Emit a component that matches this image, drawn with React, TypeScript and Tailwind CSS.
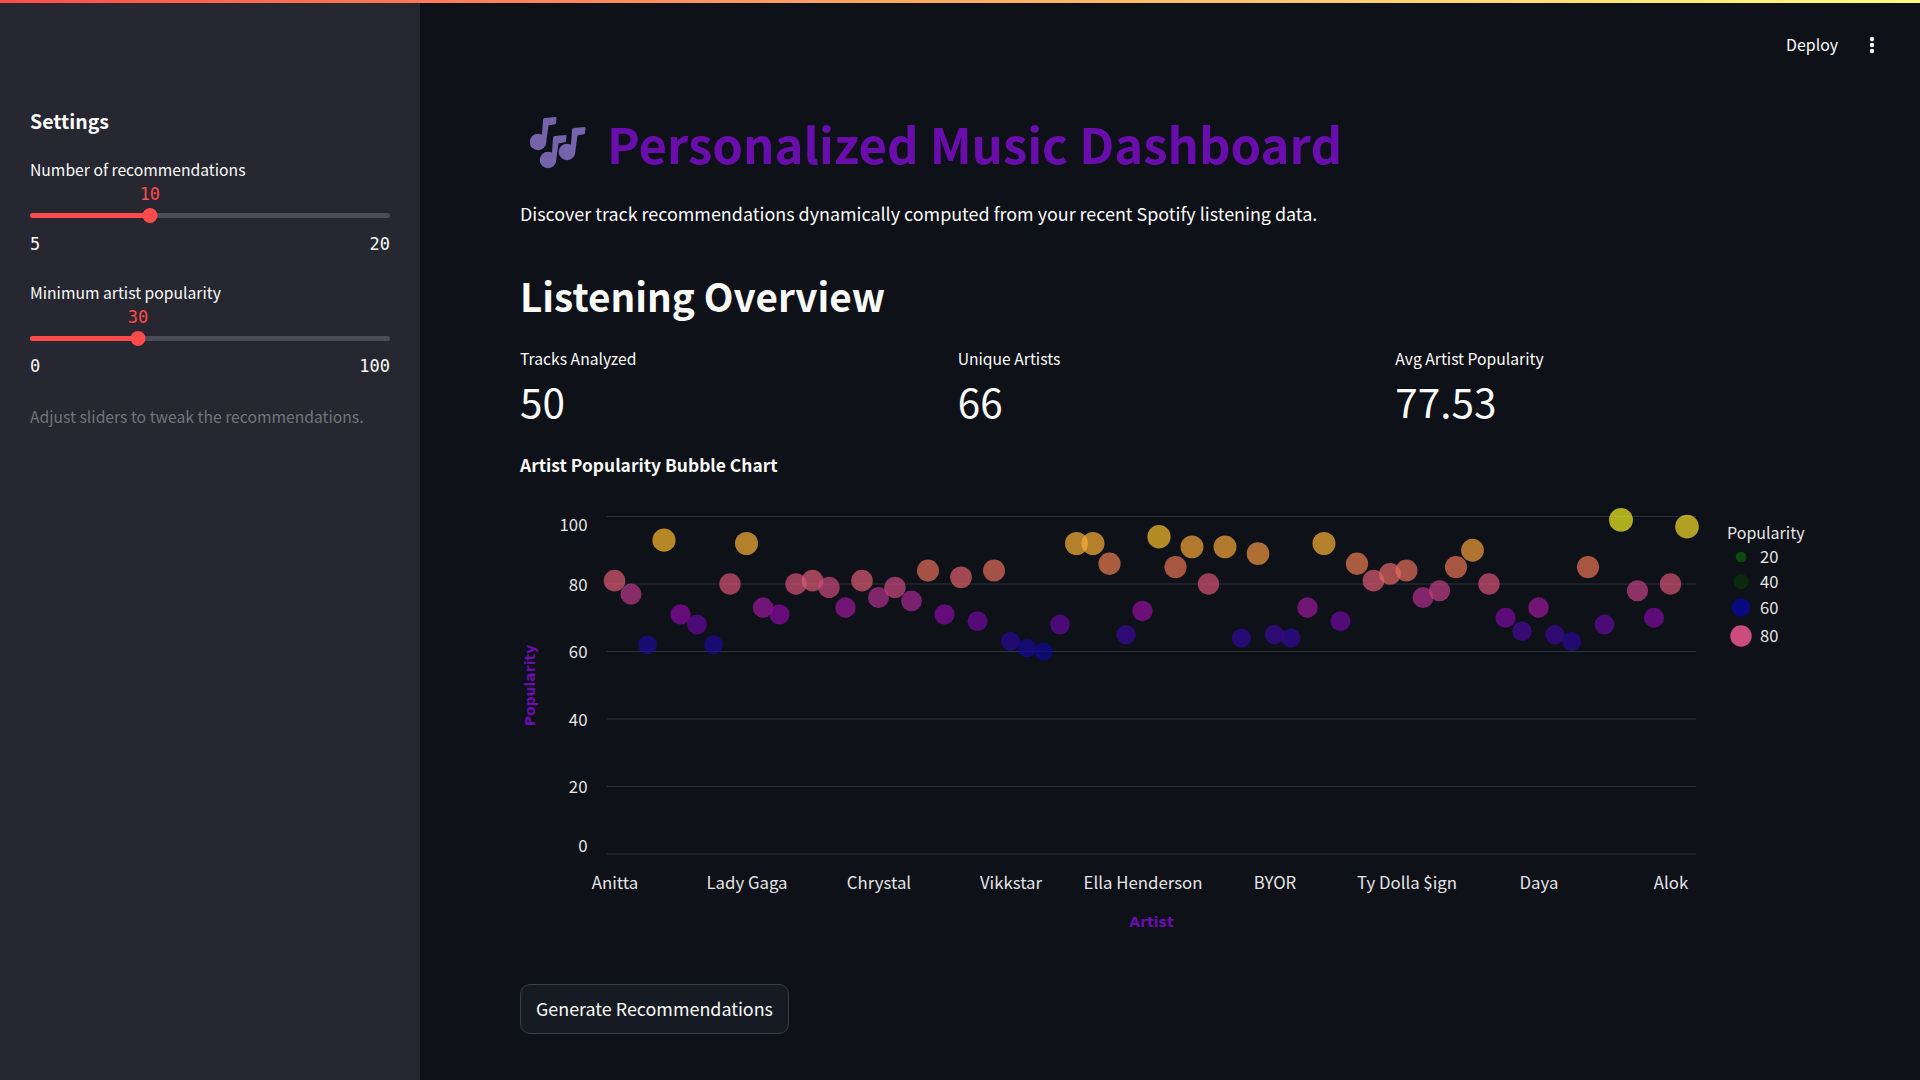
// colour stops of the chart's popularity scale
const COLOR_STOPS = [
  { p: 60, c: [13, 8, 150] },
  { p: 65, c: [60, 8, 155] },
  { p: 71, c: [140, 8, 165] },
  { p: 77, c: [185, 55, 140] },
  { p: 81, c: [222, 90, 115] },
  { p: 85, c: [232, 115, 85] },
  { p: 93, c: [253, 184, 47] },
  { p: 100, c: [240, 249, 33] },
]

// popularity per artist, read left to right off the chart
const POPULARITY = [
  81, 77, 62, 93, 71, 68, 62, 80, 92, 73, 71, 80, 81, 79, 73, 81, 76, 79, 75, 84, 71, 82, 69,
  84, 63, 61, 60, 68, 92, 92, 86, 65, 72, 94, 85, 91, 80, 91, 64, 89, 65, 64, 73, 92, 69, 86,
  81, 83, 84, 76, 78, 85, 90, 80, 70, 66, 73, 65, 63, 85, 68, 99, 78, 70, 80, 97,
]

const X_LABELS = [
  { label: 'Anitta', i: 0 },
  { label: 'Lady Gaga', i: 8 },
  { label: 'Chrystal', i: 16 },
  { label: 'Vikkstar', i: 24 },
  { label: 'Ella Henderson', i: 32 },
  { label: 'BYOR', i: 40 },
  { label: 'Ty Dolla $ign', i: 48 },
  { label: 'Daya', i: 56 },
  { label: 'Alok', i: 64 },
]

const Y_TICKS = [
  { value: 100, y: 525 },
  { value: 80, y: 585 },
  { value: 60, y: 652 },
  { value: 40, y: 720 },
  { value: 20, y: 787 },
  { value: 0, y: 846 },
]

const LEGEND = [
  { value: 20, y: 557, color: '#0a4a0a' },
  { value: 40, y: 581.5, color: '#0a2a0e' },
  { value: 60, y: 607.5, color: '#0a0a80' },
  { value: 80, y: 636, color: '#cc4d7c' },
]

const SANS = "font-['Noto_Sans_CJK_JP',sans-serif]"
const SVG_SANS = "'Noto Sans CJK JP', sans-serif"

// chart svg starts at x=520, y=490 on the page
const CHART_X = 520
const CHART_Y = 490
const yOf = (p: number) => 854 - p * 3.375 - CHART_Y
const xOf = (i: number) => 614.5 + i * 16.5 - CHART_X
const radius = (p: number) => 1.2 * Math.sqrt(p)

function colorOf(p: number) {
  const next = COLOR_STOPS.findIndex(s => s.p >= p)
  if (next <= 0) return `rgb(${COLOR_STOPS[0].c.join(',')})`
  const a = COLOR_STOPS[next - 1]
  const b = COLOR_STOPS[next]
  const f = (p - a.p) / (b.p - a.p)
  return `rgb(${a.c.map((v, k) => Math.round(v + (b.c[k] - v) * f)).join(',')})`
}

function BubbleChart() {
  return (
    <svg width="1300" height="450" viewBox="0 0 1300 450" className="block">
      {[100, 80, 60, 40, 20, 0].map(p => (
        <line key={p} x1={87} x2={1176} y1={yOf(p)} y2={yOf(p)} stroke="#2e3138" strokeWidth="1.2" />
      ))}
      {POPULARITY.map((p, i) => (
        <circle key={i} cx={xOf(i)} cy={yOf(p)} r={radius(p)} fill={colorOf(p)} fillOpacity={0.7} />
      ))}
      {Y_TICKS.map(t => (
        <text key={t.value} x={67.5} y={t.y - CHART_Y + 6} textAnchor="end" fontSize="16.8" fill="#e4e4e6" fontFamily={SVG_SANS}>
          {t.value}
        </text>
      ))}
      {X_LABELS.map(t => (
        <text key={t.label} x={xOf(t.i) + 0.5} y={399} textAnchor="middle" fontSize="16.8" fill="#e4e4e6" fontFamily={SVG_SANS}>
          {t.label}
        </text>
      ))}
      <text transform="translate(15 195.5) rotate(-90)" textAnchor="middle" fontSize="14" fontWeight="700" fill="#6a0dad" fontFamily="'DejaVu Sans', sans-serif">
        Popularity
      </text>
      <text x={631.5} y={437} textAnchor="middle" fontSize="14" fontWeight="700" fill="#6a0dad" fontFamily="'DejaVu Sans', sans-serif">
        Artist
      </text>
      <text x={1207} y={49} fontSize="16" fill="#e4e4e6" fontFamily={SVG_SANS}>
        Popularity
      </text>
      {LEGEND.map(l => (
        <g key={l.value}>
          <circle cx={1221} cy={l.y - CHART_Y} r={radius(l.value)} fill={l.color} />
          <text x={1240} y={l.y - CHART_Y + 6} fontSize="16.6" fill="#e4e4e6" fontFamily={SVG_SANS}>
            {l.value}
          </text>
        </g>
      ))}
    </svg>
  )
}

function MusicNotes() {
  const note = (x: number, y: number) => (
    <g transform={`translate(${x} ${y})`}>
      <circle cx="8" cy="25" r="8.3" />
      <path d="M11.5 25 L13 3 Q13 1 15 1 L25.5 0 Q26.5 0 26.5 1 L26 6 Q26 7 25 7.2 L18.5 8.5 L16.2 25 Z" />
    </g>
  )
  return (
    <svg width="56" height="53" viewBox="0 0 56 53" fill="#7464ac" className="shrink-0">
      {note(0, 0)}
      {note(10, 18)}
      {note(29, 10)}
    </svg>
  )
}

function SidebarSlider({ label, value, min, max, pct }: { label: string; value: number; min: number; max: number; pct: number }) {
  return (
    <div>
      <div className="text-[15.7px] leading-[24px] text-[#fafafa]">{label}</div>
      <div className="relative h-[26px]">
        <span
          className="absolute top-0 -translate-x-1/2 font-['DejaVu_Sans_Mono',monospace] text-[17px] leading-[24px] text-[#ff4b4b]"
          style={{ left: `${pct}%` }}
        >
          {value}
        </span>
      </div>
      <div className="relative h-[15px]">
        <div className="absolute left-0 right-0 top-[5px] h-[5px] rounded-full bg-[#4a4c58]" />
        <div className="absolute left-0 top-[5px] h-[5px] rounded-full bg-[#ff4b4b]" style={{ width: `${pct}%` }} />
        <div className="absolute top-0 h-[15px] w-[15px] -translate-x-1/2 rounded-full bg-[#ff4b4b]" style={{ left: `${pct}%` }} />
      </div>
      <div className="mt-[8.5px] flex justify-between font-['DejaVu_Sans_Mono',monospace] text-[17px] leading-[24px] text-[#fafafa]">
        <span>{min}</span>
        <span>{max}</span>
      </div>
    </div>
  )
}

function Metric({ label, value }: { label: string; value: string }) {
  return (
    <div>
      <div className="text-[15.7px] leading-[24px] text-[#fafafa]">{label}</div>
      <div className="mt-[2px] text-[40.5px] leading-[56px] text-[#fafafa]">{value}</div>
    </div>
  )
}

export default function App() {
  return (
    <div className={`flex h-[1080px] w-[1920px] flex-col overflow-hidden bg-[#0e1117] ${SANS}`}>
      <div className="h-[3px] shrink-0 bg-gradient-to-r from-[#ff4b4b] to-[#fffd80]" />
      <div className="flex min-h-0 flex-1">
        <aside className="w-[420px] shrink-0 bg-[#262730] px-[30px] pt-[101px]">
          <h3 className="text-[19.5px] font-semibold leading-[34px] text-[#fafafa]">Settings</h3>
          <div className="mt-[20px] flex flex-col gap-[25px]">
            <SidebarSlider label="Number of recommendations" value={10} min={5} max={20} pct={33.3} />
            <SidebarSlider label="Minimum artist popularity" value={30} min={0} max={100} pct={30} />
          </div>
          <p className="mt-[27px] whitespace-nowrap text-[15.7px] leading-[24px] text-[#73737a]">Adjust sliders to tweak the recommendations.</p>
        </aside>

        <main className="relative min-w-0 flex-1 pl-[100px]">
          <div className="absolute right-[45px] top-[30px] flex items-center gap-[31px] text-[15.9px] leading-[24px] text-[#fafafa]">
            <span>Deploy</span>
            <svg width="6" height="18" viewBox="0 0 6 18" fill="#fafafa">
              <circle cx="3" cy="3" r="2.2" />
              <circle cx="3" cy="9" r="2.2" />
              <circle cx="3" cy="15" r="2.2" />
            </svg>
          </div>

          <div className="ml-[10px] mt-[107px] flex h-[66px] items-center gap-[21px]">
            <MusicNotes />
            <h1 className="text-[49.1px] font-bold leading-[66px] text-[#6a0dad]">Personalized Music Dashboard</h1>
          </div>
          <p className="mt-[23px] text-[17.92px] leading-[28px] text-[#fafafa]">
            Discover track recommendations dynamically computed from your recent Spotify listening data.
          </p>
          <h2 className="mt-[40px] text-[38.7px] font-semibold leading-[56px] text-[#fafafa]">Listening Overview</h2>
          <div className="mt-[24px] grid w-[1313px] grid-cols-3">
            <Metric label="Tracks Analyzed" value="50" />
            <Metric label="Unique Artists" value="66" />
            <Metric label="Avg Artist Popularity" value="77.53" />
          </div>
          <div className="mt-[22px] text-[17.4px] font-semibold leading-[28px] text-[#fafafa]">Artist Popularity Bubble Chart</div>
          <div className="mt-[11px]">
            <BubbleChart />
          </div>
          <button
            type="button"
            className="mt-[44px] h-[50px] w-[269px] rounded-[10px] border border-[#3b3d45] bg-[#161a22] pb-[2px] text-[17.9px] text-[#fafafa]"
          >
            Generate Recommendations
          </button>
        </main>
      </div>
    </div>
  )
}
